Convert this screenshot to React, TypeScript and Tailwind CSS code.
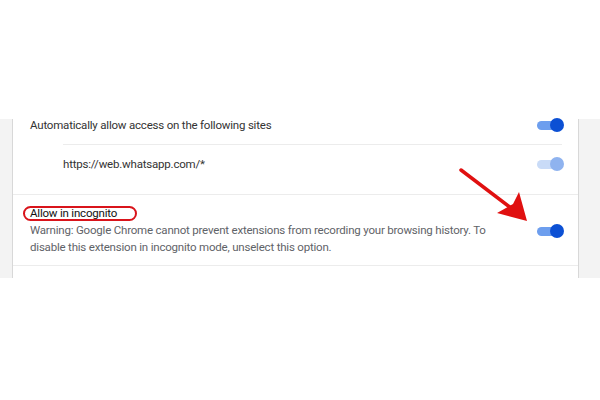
import React from 'react';

const Toggle = ({ disabled = false }: { disabled?: boolean }) => (
  <div className="relative w-[27px] h-[14px] shrink-0">
    <div
      className={`absolute left-0 top-[3px] w-[22px] h-[9px] rounded-full ${
        disabled ? 'bg-[#c9dbf7]' : 'bg-[#6d9eee]'
      }`}
    />
    <div
      className={`absolute right-0 top-0 w-[14px] h-[14px] rounded-full ${
        disabled ? 'bg-[#8fb3ef]' : 'bg-[#0c50d4]'
      }`}
    />
  </div>
);

export default function App() {
  return (
    <div
      className="w-[600px] h-[400px] bg-white overflow-hidden tracking-[-0.2px]"
      style={{ fontFamily: 'Roboto, "Liberation Sans", sans-serif' }}
    >
      <div className="h-[119px]" />
      <div className="flex h-[159px]">
        <div className="w-[13px] bg-[#f3f3f3] border-r border-[#d8d8d8]" />
        <div className="flex-1 relative">
          {/* sites header row */}
          <div className="flex items-start h-[25px] pl-[17px] pr-[14px]">
            <span className="text-[11.5px] leading-[12px] text-[#333]">Automatically allow access on the following sites</span>
            <div className="ml-auto -mt-[1px]"><Toggle /></div>
          </div>
          <div className="ml-[50px] mr-[16px] border-t border-[#ececec]" />
          <div className="flex items-start h-[49px] pt-[12px] pl-[50px] pr-[14px]">
            <span className="text-[11.5px] leading-[14px] text-[#333]">https://web.whatsapp.com/*</span>
            <div className="ml-auto"><Toggle disabled /></div>
          </div>
          <div className="border-t border-[#ececec]" />
          <div className="flex items-center h-[70px] pl-[17px] pr-[14px]">
            <div className="flex flex-col">
              <span className="text-[11.5px] leading-[17px] text-[#111]">Allow in incognito</span>
              <span className="text-[11.5px] leading-[17px] text-[#5f6368] w-[456px]">
                Warning: Google Chrome cannot prevent extensions from recording your browsing history. To disable this extension in incognito mode, unselect this option.
              </span>
            </div>
            <div className="ml-auto mt-[1px]"><Toggle /></div>
          </div>
          <div className="border-t border-[#ececec]" />

          {/* annotation: ellipse */}
          <div className="absolute left-[10px] top-[87px] w-[114px] h-[15px] rounded-full border-2 border-[#d9141b]" />
          {/* annotation: arrow */}
          <svg className="absolute left-[440px] top-[45px]" width="80" height="65" viewBox="0 0 80 65">
            <line x1="8" y1="6" x2="62" y2="47" stroke="#e01010" strokeWidth="3.5" strokeLinecap="round" />
            <polygon points="74,57 44,49 60,40 66,28" fill="#e01010" />
          </svg>
        </div>
        <div className="w-[22px] bg-[#f3f3f3] border-l border-[#d8d8d8]" />
      </div>
    </div>
  );
}
